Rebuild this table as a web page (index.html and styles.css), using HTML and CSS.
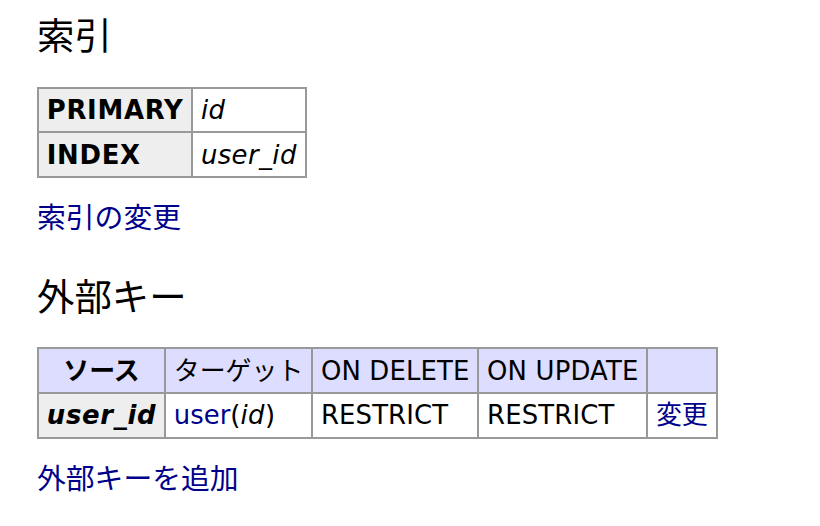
FILE: index.html
```html
<!DOCTYPE html>
<html lang="ja">
<head>
  <meta charset="UTF-8" />
  <title>索引と外部キー</title>
  <link rel="stylesheet" href="styles.css">
</head>
<body>
  <div class="content">
    <h3 class="first">索引</h3>
    <table class="grid">
      <tbody>
        <tr>
          <th>PRIMARY</th>
          <td><i>id</i></td>
        </tr>
        <tr>
          <th>INDEX</th>
          <td><i>user_id</i></td>
        </tr>
      </tbody>
    </table>
    <p class="links"><a href="#">索引の変更</a></p>

    <h3>外部キー</h3>
    <table class="grid">
      <thead>
        <tr>
          <th>ソース</th>
          <td>ターゲット</td>
          <td class="action">ON DELETE</td>
          <td class="action">ON UPDATE</td>
          <td>&nbsp;</td>
        </tr>
      </thead>
      <tbody>
        <tr>
          <th><i>user_id</i></th>
          <td><a href="#">user</a>(<i>id</i>)</td>
          <td class="action">RESTRICT</td>
          <td class="action">RESTRICT</td>
          <td><a href="#">変更</a></td>
        </tr>
      </tbody>
    </table>
    <p class="links"><a href="#">外部キーを追加</a></p>
  </div>
</body>
</html>
```

FILE: styles.css
```css
* {
  box-sizing: border-box;
}

body {
  margin: 0;
  background: #fff;
  color: #000;
  font: 28.8px/1.25 "DejaVu Sans", "Noto Sans CJK JP", sans-serif;
}

.content {
  padding: 0 20px 20px 37px;
}

a {
  color: #00008b;
  text-decoration: none;
}

h3 {
  font-weight: normal;
  font-size: 130%;
  margin: 1em 0 0;
}

h3.first {
  margin-top: 14px;
}

.grid {
  margin: 1em 20px 0 0;
  border-collapse: collapse;
  border-spacing: 0;
  border-top: 2px solid #999;
  border-left: 2px solid #999;
  font-size: 90%;
}

.grid td,
.grid th {
  border: 0;
  border-right: 2px solid #999;
  border-bottom: 2px solid #999;
  padding: .2em .3em;
  white-space: nowrap;
}

.grid th {
  background: #eee;
  text-align: left;
  letter-spacing: .7px;
}

.grid td i {
  letter-spacing: .4px;
}

.grid td.action {
  letter-spacing: .15px;
}

.grid thead td,
.grid thead th {
  background: #ddf;
}

.grid thead th {
  text-align: center;
  padding: .2em .5em;
  letter-spacing: 0;
}

.links {
  margin: .8em 20px 0 0;
}
```
